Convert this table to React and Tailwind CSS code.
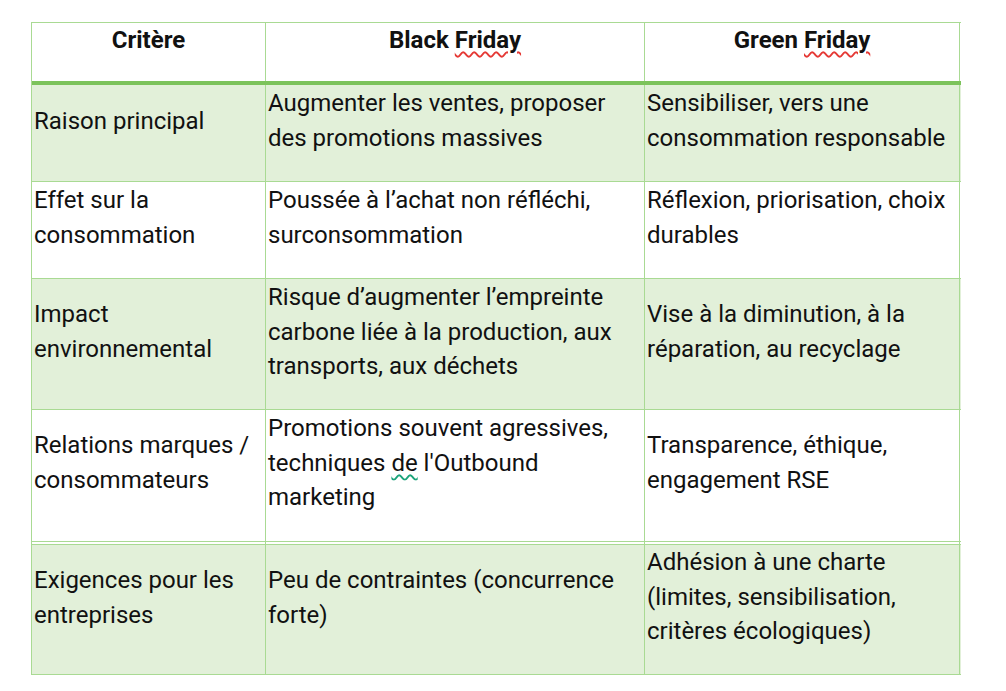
import React from "react";

const rows = [
  {
    bg: "bg-[#e2f0d9]",
    h: "h-[97px]",
    cells: [
      { pt: "pt-[19px]", lines: ["Raison principal"] },
      { pt: "pt-[1px]", lines: ["Augmenter les ventes, proposer", "des promotions massives"] },
      { pt: "pt-[1px]", lines: ["Sensibiliser, vers une", "consommation responsable"] },
    ],
  },
  {
    bg: "bg-white",
    h: "h-[97px]",
    cells: [
      { pt: "pt-[1px]", lines: ["Effet sur la", "consommation"] },
      { pt: "pt-[1px]", lines: ["Poussée à l’achat non réfléchi,", "surconsommation"] },
      { pt: "pt-[1px]", lines: ["Réflexion, priorisation, choix", "durables"] },
    ],
  },
  {
    bg: "bg-[#e2f0d9]",
    h: "h-[131px]",
    cells: [
      { pt: "pt-[18px]", lines: ["Impact", "environnemental"] },
      {
        pt: "pt-[1px]",
        lines: ["Risque d’augmenter l’empreinte", "carbone liée à la production, aux", "transports, aux déchets"],
      },
      { pt: "pt-[18px]", lines: ["Vise à la diminution, à la", "réparation, au recyclage"] },
    ],
  },
  {
    bg: "bg-white",
    h: "h-[132px]",
    cells: [
      { pt: "pt-[18px]", lines: ["Relations marques /", "consommateurs"] },
      {
        pt: "pt-[1px]",
        lines: [
          "Promotions souvent agressives,",
          <>
            techniques{" "}
            <span className="underline decoration-wavy decoration-[#1aa37a] decoration-[1.5px] underline-offset-[3px]">de</span>{" "}
            l'Outbound
          </>,
          "marketing",
        ],
      },
      { pt: "pt-[18px]", lines: ["Transparence, éthique,", "engagement RSE"] },
    ],
  },
];

const lastRow = {
  bg: "bg-[#e2f0d9]",
  h: "h-[131px]",
  cells: [
    { pt: "pt-[18px]", lines: ["Exigences pour les", "entreprises"] },
    { pt: "pt-[18px]", lines: ["Peu de contraintes (concurrence", "forte)"] },
    { pt: "pt-[0px]", lines: ["Adhésion à une charte", "(limites, sensibilisation,", "critères écologiques)"] },
  ],
};

const widths = ["w-[234px]", "w-[379px]", "w-[315px]"];

function Row({ row, topBorder }) {
  return (
    <div className={`flex ${row.bg} ${row.h} box-border border-b border-[#a9da93] ${topBorder ? "border-t" : ""}`}>
      {row.cells.map((c, i) => (
        <div
          key={i}
          className={`${widths[i]} shrink-0 border-r border-[#a9da93] pl-[2px] ${c.pt}`}
        >
          {c.lines.map((l, j) => (
            <div key={j} className="whitespace-nowrap">
              {l}
            </div>
          ))}
        </div>
      ))}
    </div>
  );
}

export default function App() {
  return (
    <div
      className="w-[1006px] h-[691px] bg-white pt-[22px] pl-[31px] text-[#111]"
      style={{ fontFamily: "Roboto, 'Noto Sans', sans-serif" }}
    >
      <div className="w-[930px] border-t border-l border-[#a9da93] text-[24px] leading-[34.5px]">
        <div className="flex h-[62px] box-border border-b-4 border-[#7cc35b] bg-white font-bold">
          <div className={`${widths[0]} shrink-0 border-r border-[#a9da93] text-center`}>Critère</div>
          <div className={`${widths[1]} shrink-0 border-r border-[#a9da93] text-center`}>
            Black{" "}
            <span className="underline decoration-wavy decoration-[#e53935] decoration-[1.5px] underline-offset-[3px]">
              Friday
            </span>
          </div>
          <div className={`${widths[2]} shrink-0 border-r border-[#a9da93] text-center`}>
            Green{" "}
            <span className="underline decoration-wavy decoration-[#e53935] decoration-[1.5px] underline-offset-[3px]">
              Friday
            </span>
          </div>
        </div>
        {rows.map((r, i) => (
          <Row key={i} row={r} />
        ))}
        <div className="flex h-[2px] bg-white">
          {widths.map((w, i) => (
            <div key={i} className={`${w} shrink-0 border-r border-[#a9da93]`} />
          ))}
        </div>
        <Row row={lastRow} topBorder />
      </div>
    </div>
  );
}
